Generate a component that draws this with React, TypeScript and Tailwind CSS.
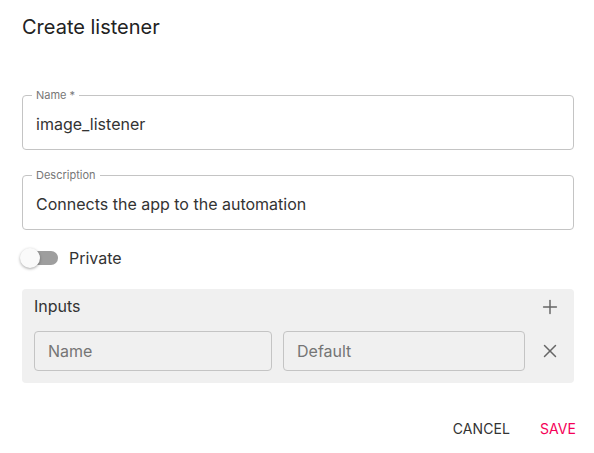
import { Plus, X } from "lucide-react"

function OutlinedField({ label, value }: { label: string; value: string }) {
  return (
    <fieldset className="m-0 rounded-[4px] border border-[#c4c4c4] px-0 pb-0 pt-0">
      <legend className="ml-[9px] px-[4px] text-[11px] leading-[12px] text-[#777]">
        {label}
      </legend>
      <div className="flex h-[48px] items-center px-[13px] pb-[2px] text-[16px] text-[#333]">
        {value}
      </div>
    </fieldset>
  )
}

export default function App() {
  return (
    <div
      className="h-[453px] w-[594px] bg-white text-[#222]"
      style={{ fontFamily: "Inter, 'Noto Sans', sans-serif" }}
    >
      <div className="pl-[22px] pr-[20px]">
        {/* Title */}
        <h2 className="pt-[13px] text-[20px] leading-[28px] font-normal text-[#222]">
          Create listener
        </h2>

        <div className="mt-[48px]">
          <OutlinedField label="Name *" value="image_listener" />
        </div>
        <div className="mt-[19px]">
          <OutlinedField label="Description" value="Connects the app to the automation" />
        </div>

        {/* Private switch */}
        <div className="mt-[17px] flex h-[22px] items-center">
          <div className="relative h-[20px] w-[36px]">
            <div className="absolute left-[3px] top-[3px] h-[14px] w-[33px] rounded-full bg-[#9e9e9e]" />
            <div className="absolute left-[-2px] top-0 h-[20px] w-[20px] rounded-full bg-[#fafafa] shadow-[0_1px_3px_rgba(0,0,0,0.35)]" />
          </div>
          <span className="ml-[11px] text-[16px] text-[#333]">Private</span>
        </div>

        {/* Inputs panel */}
        <div className="mt-[20px] rounded-[4px] bg-[#f0f0f0] pb-[12px] pl-[12px]">
          <div className="flex h-[40px] items-center justify-between">
            <span className="pb-[6px] text-[16px] text-[#333]">Inputs</span>
            <div className="flex w-[48px] items-center justify-center pb-[4px]">
              <Plus size={22} strokeWidth={1.6} color="#666" />
            </div>
          </div>
          <div className="mt-[2px] flex items-center">
            <div className="flex h-[40px] w-[238px] items-center rounded-[4px] border border-[#c4c4c4] px-[13px] text-[16px] text-[#757575]">
              Name
            </div>
            <div className="ml-[11px] flex h-[40px] w-[242px] items-center rounded-[4px] border border-[#c4c4c4] px-[13px] text-[16px] text-[#757575]">
              Default
            </div>
            <div className="flex flex-1 items-center justify-center">
              <X size={22} strokeWidth={1.6} color="#666" />
            </div>
          </div>
        </div>
      </div>

      {/* Actions */}
      <div className="mt-[29px] flex justify-end pr-[4px]">
        <button className="min-w-[64px] px-[8px] py-[6px] text-[14px] uppercase tracking-[0.1px] text-[#333]">
          Cancel
        </button>
        <button className="ml-[8px] min-w-[64px] px-[8px] py-[6px] text-[14px] uppercase tracking-[0.1px] text-[#f50057]">
          Save
        </button>
      </div>
    </div>
  )
}
